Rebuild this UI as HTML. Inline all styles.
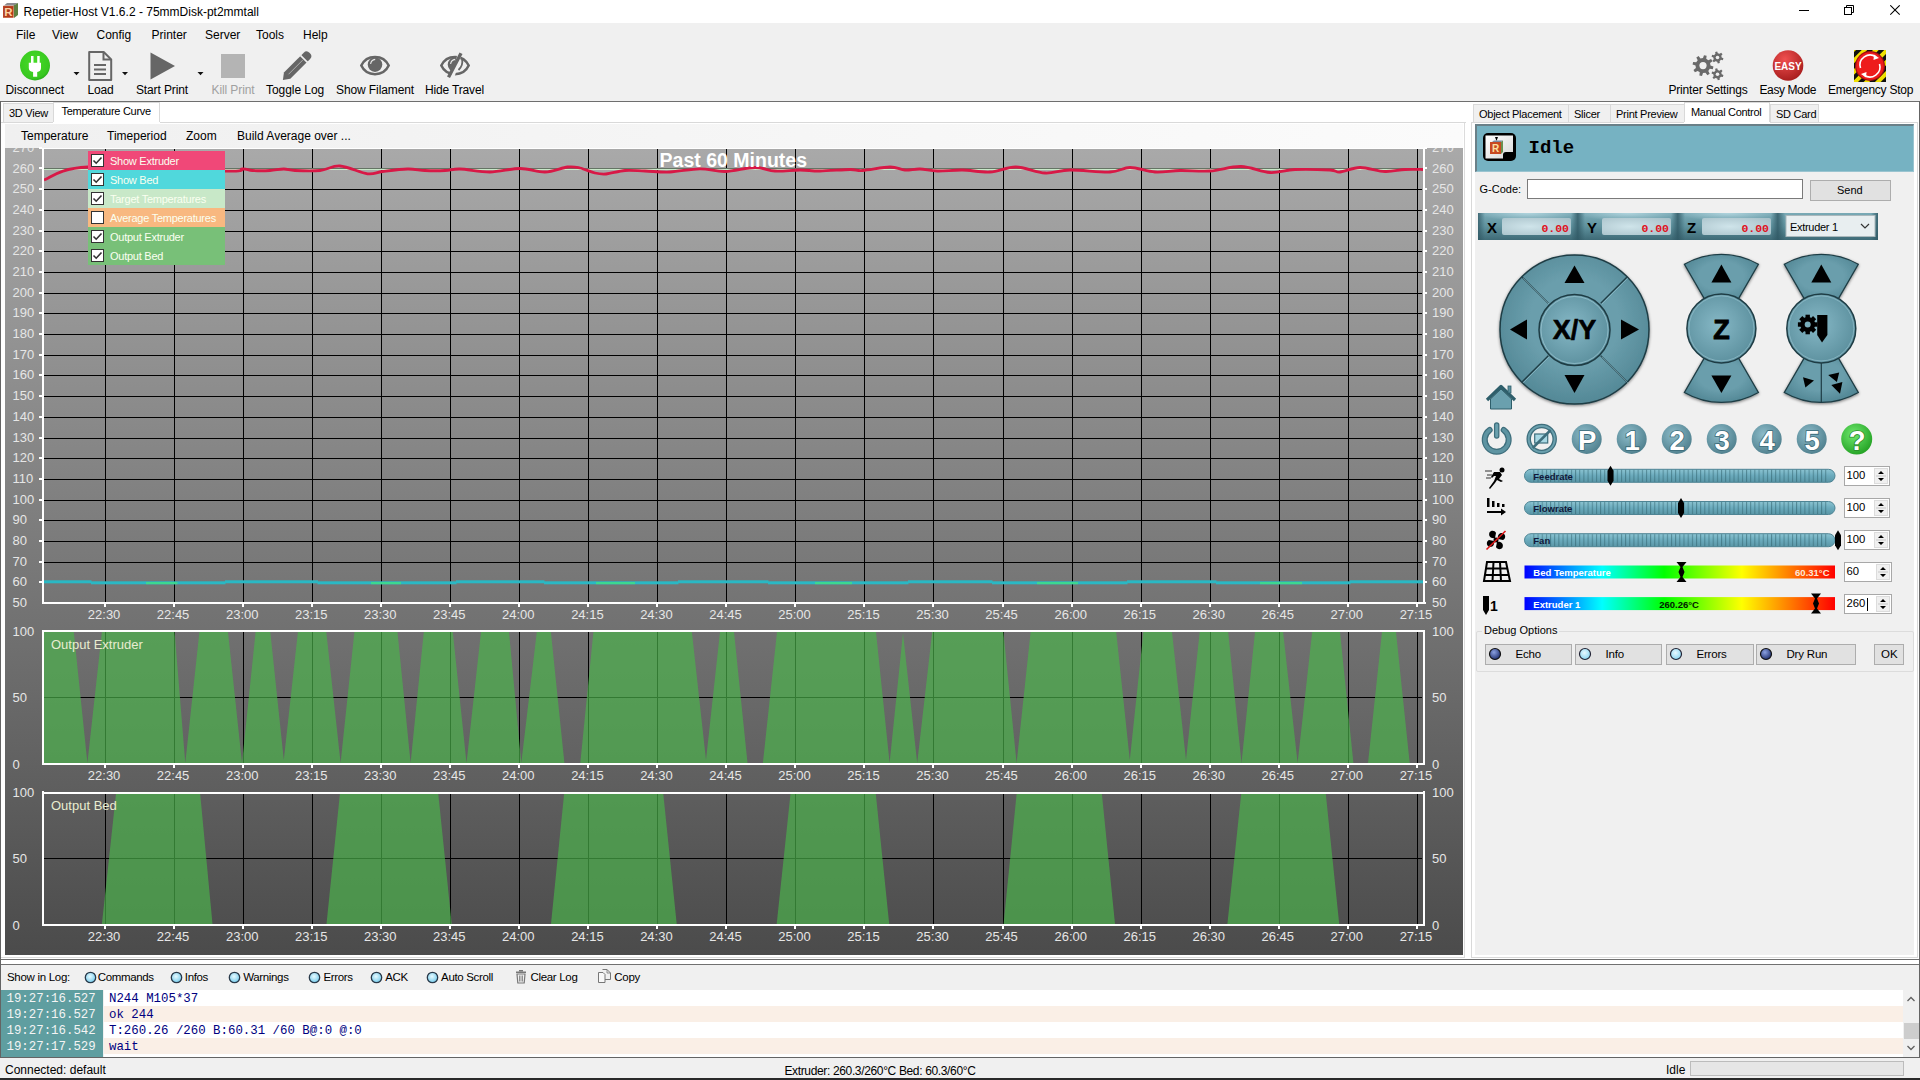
<!DOCTYPE html><html><head><meta charset="utf-8"><title>Repetier-Host</title><style>
*{box-sizing:border-box}
html,body{margin:0;padding:0}
body{width:1920px;height:1080px;position:relative;overflow:hidden;background:#f0f0f0;font-family:"Liberation Sans",sans-serif;font-size:12px;color:#000}
.a{position:absolute}
.t{position:absolute;white-space:nowrap;line-height:1}
.mono{font-family:"Liberation Mono",monospace}
</style></head><body><div class="a" style="left:0;top:0;width:1920px;height:23px;background:#fff"></div><div class="t" style="left:23.5px;top:5.5px;font-size:12px;color:#000">Repetier-Host V1.6.2 - 75mmDisk-pt2mmtall</div><svg class="a" style="left:0;top:0" width="22" height="22"><path d="M4 5.5 L7 3 L18 3 L14 5.5 Z" fill="#8c8c90"/><path d="M13.5 5.5 L18 3 L18 15 L14 18 Z" fill="#5e8040"/><rect x="3" y="5.8" width="10.6" height="12" fill="#c04a28"/><rect x="3.8" y="6.6" width="9" height="10.4" fill="#b03a1a"/><text x="4.3" y="16.2" font-family="Liberation Sans" font-weight="bold" font-size="11.5" fill="#fcd2a2">R</text></svg><div class="a" style="left:1799px;top:10px;width:10px;height:1px;background:#000"></div><svg class="a" style="left:1844px;top:5px" width="12" height="12"><rect x="0.5" y="2.5" width="7" height="7" fill="none" stroke="#000"/><path d="M2.5 2.5 V0.5 H9.5 V7.5 H7.5" fill="none" stroke="#000"/></svg><svg class="a" style="left:1890px;top:5px" width="12" height="12"><path d="M0.3 0.3 L9.7 9.7 M9.7 0.3 L0.3 9.7" stroke="#000" stroke-width="1.05"/></svg><div class="t" style="left:16px;top:29px">File</div><div class="t" style="left:52px;top:29px">View</div><div class="t" style="left:96.5px;top:29px">Config</div><div class="t" style="left:151.5px;top:29px">Printer</div><div class="t" style="left:205px;top:29px">Server</div><div class="t" style="left:256px;top:29px">Tools</div><div class="t" style="left:303px;top:29px">Help</div><svg class="a" style="left:0;top:45px" width="500" height="40">
<defs><radialGradient id="gg" cx="0.45" cy="0.4" r="0.65"><stop offset="0" stop-color="#48dc28"/><stop offset="0.8" stop-color="#38c820"/><stop offset="1" stop-color="#22a018"/></radialGradient></defs>
<circle cx="35" cy="20.5" r="15" fill="url(#gg)"/>
<path d="M31 11 h2.5 v6.7 h3.7 v-6.7 h2.5 v6.7 h1.3 v5.3 q0 3.3 -3.8 4 v4.7 h-4.1 v-4.7 q-4.3 -0.7 -4.3 -4 v-5.3 h2.2 z" fill="#fff"/>
<path d="M73.5 27 h6 l-3 3.3 z" fill="#111"/>
<path d="M89.2 7 h14.5 l7.5 7.5 v20.5 h-22 z" fill="none" stroke="#666" stroke-width="2" stroke-linejoin="round"/>
<path d="M103.5 7 v7.5 h7.5" fill="none" stroke="#666" stroke-width="2"/>
<rect x="94" y="19" width="12" height="2" fill="#666"/><rect x="94" y="23.5" width="12" height="2" fill="#666"/><rect x="94" y="28" width="12" height="2" fill="#666"/>
<path d="M122 27 h6 l-3 3.3 z" fill="#111"/>
<path d="M150.5 7.5 L175 21 L150.5 34.5 Z" fill="#666"/>
<path d="M197.5 27 h6 l-3 3.3 z" fill="#111"/>
<rect x="221" y="9" width="24" height="24" fill="#b4b4b4"/>
<g transform="translate(285,32.8) rotate(-45)"><path d="M3 -4.5 H31 Q35 -4.5 35 0 Q35 4.5 31 4.5 H3 L-3 0 Z" fill="#666"/><rect x="26" y="-5" width="1.6" height="10" fill="#f0f0f0"/><line x1="5" y1="0" x2="25" y2="0" stroke="#bbb" stroke-width="0.8"/></g>
<path d="M361.3 20.6 C366.5 9, 383.5 9, 388.7 20.6 C383.5 32, 366.5 32, 361.3 20.6 Z" fill="none" stroke="#666" stroke-width="2.5"/>
<circle cx="375" cy="19.6" r="7.3" fill="#666"/><path d="M370.6 19 q0.6 -4.2 4.6 -4.6" stroke="#e8e8e8" stroke-width="1.1" fill="none"/>
<defs><clipPath id="htl"><path d="M430 0 H460.5 L448 40 H430 Z"/></clipPath><clipPath id="htr"><path d="M464.5 0 H500 V40 H452 Z"/></clipPath></defs>
<g clip-path="url(#htl)"><path d="M441.3 20.6 C446.5 9, 463.5 9, 468.7 20.6 C463.5 32, 446.5 32, 441.3 20.6 Z" fill="none" stroke="#666" stroke-width="2.5"/><circle cx="455" cy="19.6" r="7.3" fill="#666"/><path d="M450.6 19 q0.6 -4.2 4.6 -4.6" stroke="#e8e8e8" stroke-width="1.1" fill="none"/></g>
<g clip-path="url(#htr)"><path d="M441.3 20.6 C446.5 9, 463.5 9, 468.7 20.6 C463.5 32, 446.5 32, 441.3 20.6 Z" fill="none" stroke="#666" stroke-width="2.5"/><path d="M462 14 Q463.5 20 458.5 25" fill="none" stroke="#666" stroke-width="1.8"/></g>
<path d="M459.5 7.5 L462.5 9 L450 33 L447 31.5 Z" fill="#666"/>
</svg><div class="t" style="left:5.5px;top:84px;color:#000;letter-spacing:-0.1px">Disconnect</div><div class="t" style="left:87.5px;top:84px;color:#000;letter-spacing:-0.2px">Load</div><div class="t" style="left:136px;top:84px;color:#000;letter-spacing:-0.13px">Start Print</div><div class="t" style="left:211.5px;top:84px;color:#a0a0a0;letter-spacing:-0.1px">Kill Print</div><div class="t" style="left:266px;top:84px;color:#000;letter-spacing:-0.05px">Toggle Log</div><div class="t" style="left:336px;top:84px;color:#000;letter-spacing:-0.1px">Show Filament</div><div class="t" style="left:425px;top:84px;color:#000;letter-spacing:-0.16px">Hide Travel</div><svg class="a" style="left:1680px;top:45px" width="240" height="40">
<g fill="#6a6a6a"><path d="M30.50 20.60 L33.45 21.59 L32.85 24.23 L29.76 23.85 L28.30 25.90 L29.69 28.69 L27.40 30.14 L25.49 27.68 L23.00 28.10 L22.01 31.05 L19.37 30.45 L19.75 27.36 L17.70 25.90 L14.91 27.29 L13.46 25.00 L15.92 23.09 L15.50 20.60 L12.55 19.61 L13.15 16.97 L16.24 17.35 L17.70 15.30 L16.31 12.51 L18.60 11.06 L20.51 13.52 L23.00 13.10 L23.99 10.15 L26.63 10.75 L26.25 13.84 L28.30 15.30 L31.09 13.91 L32.54 16.20 L30.08 18.11 Z"/><path d="M41.70 12.50 L43.45 13.25 L42.85 15.22 L40.97 14.86 L39.60 16.14 L39.83 18.03 L37.81 18.49 L37.19 16.69 L35.40 16.14 L33.87 17.28 L32.47 15.77 L33.72 14.33 L33.30 12.50 L31.55 11.75 L32.15 9.78 L34.03 10.14 L35.40 8.86 L35.17 6.97 L37.19 6.51 L37.81 8.31 L39.60 8.86 L41.13 7.72 L42.53 9.23 L41.28 10.67 Z"/><path d="M41.70 29.30 L43.45 30.05 L42.85 32.02 L40.97 31.66 L39.60 32.94 L39.83 34.83 L37.81 35.29 L37.19 33.49 L35.40 32.94 L33.87 34.08 L32.47 32.57 L33.72 31.13 L33.30 29.30 L31.55 28.55 L32.15 26.58 L34.03 26.94 L35.40 25.66 L35.17 23.77 L37.19 23.31 L37.81 25.11 L39.60 25.66 L41.13 24.52 L42.53 26.03 L41.28 27.47 Z"/></g>
<circle cx="23" cy="20.6" r="3.6" fill="#f0f0f0"/><circle cx="37.5" cy="12.5" r="1.8" fill="#f0f0f0"/><circle cx="37.5" cy="29.3" r="1.8" fill="#f0f0f0"/>
<defs><radialGradient id="rg" cx="0.4" cy="0.3" r="0.8"><stop offset="0" stop-color="#f05050"/><stop offset="1" stop-color="#a01818"/></radialGradient>
<pattern id="hz" width="8" height="8" patternUnits="userSpaceOnUse" patternTransform="rotate(45)"><rect width="4" height="8" fill="#111"/><rect x="4" width="4" height="8" fill="#f0e000"/></pattern></defs>
<circle cx="108" cy="20.5" r="15.3" fill="url(#rg)"/>
<text x="108" y="24.5" text-anchor="middle" font-family="Liberation Sans" font-weight="bold" font-size="10" fill="#fff">EASY</text>
<rect x="174" y="5" width="32" height="32" fill="url(#hz)"/>
<circle cx="190" cy="21" r="15" fill="#a01010"/><circle cx="190" cy="21" r="13.8" fill="#ee1c1c"/>
<path d="M180.5 23 A10 10 0 0 1 196 12" fill="none" stroke="#fff" stroke-width="1.6"/><path d="M199.5 19 A10 10 0 0 1 184 30" fill="none" stroke="#fff" stroke-width="1.6"/><path d="M194 9.5 L199 13 L193.5 15 Z" fill="#fff"/><path d="M186 32.5 L181 29 L186.5 27 Z" fill="#fff"/>
</svg><div class="t" style="left:1668.5px;top:84px;letter-spacing:-0.19px">Printer Settings</div><div class="t" style="left:1759.5px;top:84px;letter-spacing:-0.4px">Easy Mode</div><div class="t" style="left:1828px;top:84px;letter-spacing:-0.26px">Emergency Stop</div><div class="a" style="left:0;top:101px;width:1920px;height:1px;background:#6e6e6e"></div><div class="a" style="left:0;top:102px;width:1467px;height:858px;background:#fff"></div><div class="a" style="left:0;top:102px;width:1px;height:858px;background:#6e6e6e"></div><div class="a" style="left:3px;top:103px;width:51px;height:20px;background:#f0f0f0;border:1px solid #d9d9d9"></div><div class="t" style="left:9px;top:108px;font-size:11px;letter-spacing:-0.26px">3D View</div><div class="a" style="left:53px;top:102px;width:107px;height:21px;background:#fff;border:1px solid #d9d9d9;border-bottom:none"></div><div class="t" style="left:61.5px;top:106px;font-size:11px;letter-spacing:-0.28px">Temperature Curve</div><div class="a" style="left:1px;top:122px;width:1465px;height:1px;background:#d9d9d9"></div><div class="a" style="left:53px;top:122px;width:107px;height:1px;background:#fff"></div><div class="a" style="left:5px;top:124px;width:1458px;height:24px;background:linear-gradient(to right,#f0f0f0,#fbfbfb)"></div><div class="t" style="left:21px;top:130px">Temperature</div><div class="t" style="left:107px;top:130px">Timeperiod</div><div class="t" style="left:186px;top:130px">Zoom</div><div class="t" style="left:237px;top:130px">Build Average over ...</div><div class="a" style="left:1464px;top:123px;width:1px;height:835px;background:#dcdcdc"></div><div class="a" style="left:1px;top:957px;width:1464px;height:1px;background:#dcdcdc"></div><svg width="1920" height="1080" style="position:absolute;left:0;top:0"><defs><linearGradient id="cg" x1="0" y1="0" x2="0" y2="1"><stop offset="0" stop-color="#a9a9a9"/><stop offset="1" stop-color="#4b4b4b"/></linearGradient><clipPath id="lclip"><rect x="0" y="148" width="1920" height="900"/></clipPath><clipPath id="tclip"><rect x="44" y="148" width="1379" height="454"/></clipPath></defs><rect x="5" y="148" width="1458" height="807" fill="url(#cg)"/><g shape-rendering="crispEdges"><rect x="44" y="582" width="1378" height="1" fill="#000"/><rect x="44" y="562" width="1378" height="1" fill="#000"/><rect x="44" y="541" width="1378" height="1" fill="#000"/><rect x="44" y="520" width="1378" height="1" fill="#000"/><rect x="44" y="500" width="1378" height="1" fill="#000"/><rect x="44" y="479" width="1378" height="1" fill="#000"/><rect x="44" y="458" width="1378" height="1" fill="#000"/><rect x="44" y="438" width="1378" height="1" fill="#000"/><rect x="44" y="417" width="1378" height="1" fill="#000"/><rect x="44" y="396" width="1378" height="1" fill="#000"/><rect x="44" y="375" width="1378" height="1" fill="#000"/><rect x="44" y="355" width="1378" height="1" fill="#000"/><rect x="44" y="334" width="1378" height="1" fill="#000"/><rect x="44" y="313" width="1378" height="1" fill="#000"/><rect x="44" y="293" width="1378" height="1" fill="#000"/><rect x="44" y="272" width="1378" height="1" fill="#000"/><rect x="44" y="251" width="1378" height="1" fill="#000"/><rect x="44" y="231" width="1378" height="1" fill="#000"/><rect x="44" y="210" width="1378" height="1" fill="#000"/><rect x="44" y="189" width="1378" height="1" fill="#000"/><rect x="44" y="168" width="1378" height="1" fill="#000"/><rect x="105" y="148" width="1" height="454" fill="#000"/><rect x="174" y="148" width="1" height="454" fill="#000"/><rect x="243" y="148" width="1" height="454" fill="#000"/><rect x="312" y="148" width="1" height="454" fill="#000"/><rect x="381" y="148" width="1" height="454" fill="#000"/><rect x="450" y="148" width="1" height="454" fill="#000"/><rect x="519" y="148" width="1" height="454" fill="#000"/><rect x="588" y="148" width="1" height="454" fill="#000"/><rect x="657" y="148" width="1" height="454" fill="#000"/><rect x="726" y="148" width="1" height="454" fill="#000"/><rect x="795" y="148" width="1" height="454" fill="#000"/><rect x="864" y="148" width="1" height="454" fill="#000"/><rect x="933" y="148" width="1" height="454" fill="#000"/><rect x="1003" y="148" width="1" height="454" fill="#000"/><rect x="1072" y="148" width="1" height="454" fill="#000"/><rect x="1141" y="148" width="1" height="454" fill="#000"/><rect x="1210" y="148" width="1" height="454" fill="#000"/><rect x="1279" y="148" width="1" height="454" fill="#000"/><rect x="1348" y="148" width="1" height="454" fill="#000"/><rect x="1417" y="148" width="1" height="454" fill="#000"/></g><g fill="#fff" shape-rendering="crispEdges"><rect x="42" y="148" width="2" height="456"/><rect x="40" y="148" width="1385" height="1"/><rect x="1423" y="148" width="2" height="456"/><rect x="42" y="602" width="1384" height="2"/><rect x="39" y="581" width="3" height="2"/><rect x="1424" y="581" width="3" height="2"/><rect x="39" y="561" width="3" height="2"/><rect x="1424" y="561" width="3" height="2"/><rect x="39" y="540" width="3" height="2"/><rect x="1424" y="540" width="3" height="2"/><rect x="39" y="519" width="3" height="2"/><rect x="1424" y="519" width="3" height="2"/><rect x="39" y="499" width="3" height="2"/><rect x="1424" y="499" width="3" height="2"/><rect x="39" y="478" width="3" height="2"/><rect x="1424" y="478" width="3" height="2"/><rect x="39" y="457" width="3" height="2"/><rect x="1424" y="457" width="3" height="2"/><rect x="39" y="437" width="3" height="2"/><rect x="1424" y="437" width="3" height="2"/><rect x="39" y="416" width="3" height="2"/><rect x="1424" y="416" width="3" height="2"/><rect x="39" y="395" width="3" height="2"/><rect x="1424" y="395" width="3" height="2"/><rect x="39" y="374" width="3" height="2"/><rect x="1424" y="374" width="3" height="2"/><rect x="39" y="354" width="3" height="2"/><rect x="1424" y="354" width="3" height="2"/><rect x="39" y="333" width="3" height="2"/><rect x="1424" y="333" width="3" height="2"/><rect x="39" y="312" width="3" height="2"/><rect x="1424" y="312" width="3" height="2"/><rect x="39" y="292" width="3" height="2"/><rect x="1424" y="292" width="3" height="2"/><rect x="39" y="271" width="3" height="2"/><rect x="1424" y="271" width="3" height="2"/><rect x="39" y="250" width="3" height="2"/><rect x="1424" y="250" width="3" height="2"/><rect x="39" y="230" width="3" height="2"/><rect x="1424" y="230" width="3" height="2"/><rect x="39" y="209" width="3" height="2"/><rect x="1424" y="209" width="3" height="2"/><rect x="39" y="188" width="3" height="2"/><rect x="1424" y="188" width="3" height="2"/><rect x="39" y="167" width="3" height="2"/><rect x="1424" y="167" width="3" height="2"/><rect x="39" y="147" width="3" height="2"/><rect x="1424" y="147" width="3" height="2"/><rect x="104" y="604" width="2" height="3"/><rect x="173" y="604" width="2" height="3"/><rect x="242" y="604" width="2" height="3"/><rect x="311" y="604" width="2" height="3"/><rect x="380" y="604" width="2" height="3"/><rect x="449" y="604" width="2" height="3"/><rect x="518" y="604" width="2" height="3"/><rect x="587" y="604" width="2" height="3"/><rect x="656" y="604" width="2" height="3"/><rect x="725" y="604" width="2" height="3"/><rect x="794" y="604" width="2" height="3"/><rect x="863" y="604" width="2" height="3"/><rect x="932" y="604" width="2" height="3"/><rect x="1002" y="604" width="2" height="3"/><rect x="1071" y="604" width="2" height="3"/><rect x="1140" y="604" width="2" height="3"/><rect x="1209" y="604" width="2" height="3"/><rect x="1278" y="604" width="2" height="3"/><rect x="1347" y="604" width="2" height="3"/><rect x="1416" y="604" width="2" height="3"/></g><g font-family="Liberation Sans, sans-serif" font-size="13" fill="#e6e6e6" clip-path="url(#lclip)"><text x="12.5" y="607.1">50</text><text x="1432" y="607.1">50</text><text x="12.5" y="586.4">60</text><text x="1432" y="586.4">60</text><text x="12.5" y="565.8">70</text><text x="1432" y="565.8">70</text><text x="12.5" y="545.0">80</text><text x="1432" y="545.0">80</text><text x="12.5" y="524.4">90</text><text x="1432" y="524.4">90</text><text x="12.5" y="503.6">100</text><text x="1432" y="503.6">100</text><text x="12.5" y="482.9">110</text><text x="1432" y="482.9">110</text><text x="12.5" y="462.2">120</text><text x="1432" y="462.2">120</text><text x="12.5" y="441.5">130</text><text x="1432" y="441.5">130</text><text x="12.5" y="420.8">140</text><text x="1432" y="420.8">140</text><text x="12.5" y="400.1">150</text><text x="1432" y="400.1">150</text><text x="12.5" y="379.4">160</text><text x="1432" y="379.4">160</text><text x="12.5" y="358.8">170</text><text x="1432" y="358.8">170</text><text x="12.5" y="338.0">180</text><text x="1432" y="338.0">180</text><text x="12.5" y="317.4">190</text><text x="1432" y="317.4">190</text><text x="12.5" y="296.6">200</text><text x="1432" y="296.6">200</text><text x="12.5" y="275.9">210</text><text x="1432" y="275.9">210</text><text x="12.5" y="255.3">220</text><text x="1432" y="255.3">220</text><text x="12.5" y="234.6">230</text><text x="1432" y="234.6">230</text><text x="12.5" y="213.9">240</text><text x="1432" y="213.9">240</text><text x="12.5" y="193.2">250</text><text x="1432" y="193.2">250</text><text x="12.5" y="172.5">260</text><text x="1432" y="172.5">260</text><text x="12.5" y="151.8">270</text><text x="1432" y="151.8">270</text><text x="104.1" y="619" text-anchor="middle">22:30</text><text x="173.1" y="619" text-anchor="middle">22:45</text><text x="242.2" y="619" text-anchor="middle">23:00</text><text x="311.2" y="619" text-anchor="middle">23:15</text><text x="380.3" y="619" text-anchor="middle">23:30</text><text x="449.3" y="619" text-anchor="middle">23:45</text><text x="518.3" y="619" text-anchor="middle">24:00</text><text x="587.4" y="619" text-anchor="middle">24:15</text><text x="656.4" y="619" text-anchor="middle">24:30</text><text x="725.5" y="619" text-anchor="middle">24:45</text><text x="794.5" y="619" text-anchor="middle">25:00</text><text x="863.5" y="619" text-anchor="middle">25:15</text><text x="932.6" y="619" text-anchor="middle">25:30</text><text x="1001.6" y="619" text-anchor="middle">25:45</text><text x="1070.7" y="619" text-anchor="middle">26:00</text><text x="1139.7" y="619" text-anchor="middle">26:15</text><text x="1208.7" y="619" text-anchor="middle">26:30</text><text x="1277.8" y="619" text-anchor="middle">26:45</text><text x="1346.8" y="619" text-anchor="middle">27:00</text><text x="1415.9" y="619" text-anchor="middle">27:15</text></g><g clip-path="url(#tclip)"><line x1="44" y1="169.3" x2="1422" y2="169.3" stroke="#c8e8c8" stroke-width="1.5"/><path fill="none" stroke="#d81846" stroke-width="2.8" stroke-linejoin="round" d="M44.0 180.0 C51.3 177.8 57.8 168.5 88.0 167.0 C118.2 165.5 199.2 171.0 225.0 171.2 C250.8 171.5 237.9 168.9 242.5 168.8 C247.1 168.6 247.9 170.2 252.5 170.5 C257.1 170.8 264.8 170.8 270.0 170.5 C275.2 170.2 279.6 169.0 283.8 169.0 C287.9 169.0 289.0 170.2 295.0 170.5 C301.0 170.8 312.5 171.2 320.0 170.5 C327.5 169.8 332.1 165.5 340.0 166.0 C347.9 166.5 360.4 172.8 367.5 173.8 C374.6 174.7 375.8 172.3 382.5 171.5 C389.2 170.7 400.4 169.2 407.5 169.0 C414.6 168.8 418.8 170.2 425.0 170.5 C431.2 170.8 439.2 170.8 445.0 170.5 C450.8 170.2 452.5 168.8 460.0 169.0 C467.5 169.2 480.0 172.1 490.0 172.0 C500.0 171.9 510.8 168.5 520.0 168.5 C529.2 168.5 537.1 172.2 545.0 172.0 C552.9 171.8 561.7 167.7 567.5 167.0 C573.3 166.3 575.4 167.0 580.0 168.0 C584.6 169.0 590.7 172.0 595.0 173.0 C599.3 174.0 601.0 174.4 606.0 174.0 C611.0 173.6 618.5 171.0 625.0 170.5 C631.5 170.0 637.5 170.8 645.0 171.0 C652.5 171.2 660.8 172.4 670.0 172.0 C679.2 171.6 690.8 168.8 700.0 168.8 C709.2 168.7 715.8 171.7 725.0 171.5 C734.2 171.3 746.7 167.6 755.0 167.5 C763.3 167.4 767.5 170.6 775.0 171.0 C782.5 171.4 792.5 170.0 800.0 170.0 C807.5 170.0 811.7 171.1 820.0 171.0 C828.3 170.9 842.9 169.6 850.0 169.5 C857.1 169.4 855.8 170.9 862.5 170.5 C869.2 170.1 882.9 167.1 890.0 167.0 C897.1 166.9 900.0 169.7 905.0 170.0 C910.0 170.3 914.6 168.8 920.0 169.0 C925.4 169.2 930.4 170.8 937.5 171.0 C944.6 171.2 953.8 169.8 962.5 170.0 C971.2 170.2 981.1 172.5 990.0 172.0 C998.9 171.5 1006.8 166.8 1016.0 167.0 C1025.2 167.2 1036.0 172.5 1045.0 173.0 C1054.0 173.5 1059.2 170.2 1070.0 170.0 C1080.8 169.8 1100.0 172.4 1110.0 172.0 C1120.0 171.6 1122.5 167.5 1130.0 167.5 C1137.5 167.5 1146.7 171.5 1155.0 172.0 C1163.3 172.5 1170.8 170.7 1180.0 170.5 C1189.2 170.3 1199.8 171.7 1210.0 171.0 C1220.2 170.3 1231.0 166.2 1241.0 166.5 C1251.0 166.8 1261.0 172.0 1270.0 172.5 C1279.0 173.0 1285.0 169.9 1295.0 169.5 C1305.0 169.1 1322.5 169.6 1330.0 170.0 C1337.5 170.4 1335.0 172.4 1340.0 172.0 C1345.0 171.6 1352.5 167.6 1360.0 167.5 C1367.5 167.4 1377.5 171.2 1385.0 171.5 C1392.5 171.8 1398.5 169.8 1405.0 169.5 C1411.5 169.2 1420.8 169.5 1424.0 169.5"/><rect x="44" y="580.3" width="47.5" height="3" fill="#2ab8c4"/><rect x="91" y="581.3" width="134.5" height="3" fill="#2ab8c4"/><rect x="225" y="580.3" width="93.0" height="3" fill="#2ab8c4"/><rect x="317.5" y="581.3" width="139.0" height="3" fill="#2ab8c4"/><rect x="456" y="580.3" width="88.5" height="3" fill="#2ab8c4"/><rect x="544" y="581.3" width="134.5" height="3" fill="#2ab8c4"/><rect x="678" y="580.3" width="90.5" height="3" fill="#2ab8c4"/><rect x="768" y="581.3" width="140.5" height="3" fill="#2ab8c4"/><rect x="908" y="580.3" width="84.5" height="3" fill="#2ab8c4"/><rect x="992" y="581.3" width="135.5" height="3" fill="#2ab8c4"/><rect x="1127" y="580.3" width="89.5" height="3" fill="#2ab8c4"/><rect x="1216" y="581.3" width="134.5" height="3" fill="#2ab8c4"/><rect x="1350" y="580.3" width="74.5" height="3" fill="#2ab8c4"/><rect x="146" y="582" width="31.5" height="2.2" fill="#3cd890"/><rect x="371" y="582" width="30" height="2.2" fill="#3cd890"/><rect x="596" y="582" width="39" height="2.2" fill="#3cd890"/><rect x="815" y="582" width="37" height="2.2" fill="#3cd890"/><rect x="1037" y="582" width="41" height="2.2" fill="#3cd890"/><rect x="1260" y="582" width="42" height="2.2" fill="#3cd890"/></g><text x="733.3" y="166.8" text-anchor="middle" font-family="Liberation Sans, sans-serif" font-size="19.5" font-weight="bold" fill="#fff" letter-spacing="0">Past 60 Minutes</text><g shape-rendering="crispEdges"><rect x="44" y="697" width="1378" height="1" fill="#000"/><rect x="105" y="632" width="1" height="131" fill="#000"/><rect x="174" y="632" width="1" height="131" fill="#000"/><rect x="243" y="632" width="1" height="131" fill="#000"/><rect x="312" y="632" width="1" height="131" fill="#000"/><rect x="381" y="632" width="1" height="131" fill="#000"/><rect x="450" y="632" width="1" height="131" fill="#000"/><rect x="519" y="632" width="1" height="131" fill="#000"/><rect x="588" y="632" width="1" height="131" fill="#000"/><rect x="657" y="632" width="1" height="131" fill="#000"/><rect x="726" y="632" width="1" height="131" fill="#000"/><rect x="795" y="632" width="1" height="131" fill="#000"/><rect x="864" y="632" width="1" height="131" fill="#000"/><rect x="933" y="632" width="1" height="131" fill="#000"/><rect x="1003" y="632" width="1" height="131" fill="#000"/><rect x="1072" y="632" width="1" height="131" fill="#000"/><rect x="1141" y="632" width="1" height="131" fill="#000"/><rect x="1210" y="632" width="1" height="131" fill="#000"/><rect x="1279" y="632" width="1" height="131" fill="#000"/><rect x="1348" y="632" width="1" height="131" fill="#000"/><rect x="1417" y="632" width="1" height="131" fill="#000"/></g><polygon fill="rgb(75,180,75)" fill-opacity="0.68" points="44.0,763.0 44.0,632.0 73.8,632.0 87.4,763.0 101.9,632.0 174.6,632.0 185.3,763.0 199.4,632.0 228.0,632.0 242.0,763.0 255.6,632.0 270.3,632.0 283.8,760.0 297.9,632.0 326.3,632.0 340.6,763.0 354.4,632.0 397.5,632.0 410.6,763.0 423.8,632.0 452.8,632.0 466.5,763.0 481.0,632.0 509.0,632.0 521.3,763.0 536.8,632.0 550.9,632.0 564.4,763.0 580.3,763.0 593.4,632.0 691.9,632.0 706.0,760.0 720.0,632.0 734.0,632.0 747.5,763.0 762.9,763.0 777.0,632.0 876.0,632.0 889.6,763.0 903.0,633.0 917.2,763.0 932.2,632.0 1003.4,632.0 1016.6,763.0 1030.6,632.0 1116.2,632.0 1129.8,760.0 1143.4,632.0 1172.0,632.0 1186.0,760.0 1199.7,632.0 1228.2,632.0 1241.5,763.0 1255.0,632.0 1283.1,632.0 1297.6,763.0 1312.2,632.0 1340.0,632.0 1353.4,763.0 1368.0,763.0 1382.0,632.0 1396.0,632.0 1409.7,763.0 1422.0,763.0 1422.0,763.0"/><g fill="#fff" shape-rendering="crispEdges"><rect x="42" y="630" width="1383" height="2"/><rect x="42" y="763" width="1383" height="2"/><rect x="42" y="630" width="2" height="135"/><rect x="1423" y="630" width="2" height="135"/><rect x="104" y="765" width="2" height="3"/><rect x="173" y="765" width="2" height="3"/><rect x="242" y="765" width="2" height="3"/><rect x="311" y="765" width="2" height="3"/><rect x="380" y="765" width="2" height="3"/><rect x="449" y="765" width="2" height="3"/><rect x="518" y="765" width="2" height="3"/><rect x="587" y="765" width="2" height="3"/><rect x="656" y="765" width="2" height="3"/><rect x="725" y="765" width="2" height="3"/><rect x="794" y="765" width="2" height="3"/><rect x="863" y="765" width="2" height="3"/><rect x="932" y="765" width="2" height="3"/><rect x="1002" y="765" width="2" height="3"/><rect x="1071" y="765" width="2" height="3"/><rect x="1140" y="765" width="2" height="3"/><rect x="1209" y="765" width="2" height="3"/><rect x="1278" y="765" width="2" height="3"/><rect x="1347" y="765" width="2" height="3"/><rect x="1416" y="765" width="2" height="3"/></g><g font-family="Liberation Sans, sans-serif" font-size="13" fill="#e6e6e6"><text x="12.5" y="635.6">100</text><text x="1432" y="635.6">100</text><text x="12.5" y="702.1">50</text><text x="1432" y="702.1">50</text><text x="12.5" y="768.6">0</text><text x="1432" y="768.6">0</text><text x="104.1" y="780" text-anchor="middle">22:30</text><text x="173.1" y="780" text-anchor="middle">22:45</text><text x="242.2" y="780" text-anchor="middle">23:00</text><text x="311.2" y="780" text-anchor="middle">23:15</text><text x="380.3" y="780" text-anchor="middle">23:30</text><text x="449.3" y="780" text-anchor="middle">23:45</text><text x="518.3" y="780" text-anchor="middle">24:00</text><text x="587.4" y="780" text-anchor="middle">24:15</text><text x="656.4" y="780" text-anchor="middle">24:30</text><text x="725.5" y="780" text-anchor="middle">24:45</text><text x="794.5" y="780" text-anchor="middle">25:00</text><text x="863.5" y="780" text-anchor="middle">25:15</text><text x="932.6" y="780" text-anchor="middle">25:30</text><text x="1001.6" y="780" text-anchor="middle">25:45</text><text x="1070.7" y="780" text-anchor="middle">26:00</text><text x="1139.7" y="780" text-anchor="middle">26:15</text><text x="1208.7" y="780" text-anchor="middle">26:30</text><text x="1277.8" y="780" text-anchor="middle">26:45</text><text x="1346.8" y="780" text-anchor="middle">27:00</text><text x="1415.9" y="780" text-anchor="middle">27:15</text></g><text x="51" y="649" font-family="Liberation Sans, sans-serif" font-size="13" fill="#e8ecd0">Output Extruder</text><g shape-rendering="crispEdges"><rect x="44" y="858" width="1378" height="1" fill="#000"/><rect x="105" y="793" width="1" height="131" fill="#000"/><rect x="174" y="793" width="1" height="131" fill="#000"/><rect x="243" y="793" width="1" height="131" fill="#000"/><rect x="312" y="793" width="1" height="131" fill="#000"/><rect x="381" y="793" width="1" height="131" fill="#000"/><rect x="450" y="793" width="1" height="131" fill="#000"/><rect x="519" y="793" width="1" height="131" fill="#000"/><rect x="588" y="793" width="1" height="131" fill="#000"/><rect x="657" y="793" width="1" height="131" fill="#000"/><rect x="726" y="793" width="1" height="131" fill="#000"/><rect x="795" y="793" width="1" height="131" fill="#000"/><rect x="864" y="793" width="1" height="131" fill="#000"/><rect x="933" y="793" width="1" height="131" fill="#000"/><rect x="1003" y="793" width="1" height="131" fill="#000"/><rect x="1072" y="793" width="1" height="131" fill="#000"/><rect x="1141" y="793" width="1" height="131" fill="#000"/><rect x="1210" y="793" width="1" height="131" fill="#000"/><rect x="1279" y="793" width="1" height="131" fill="#000"/><rect x="1348" y="793" width="1" height="131" fill="#000"/><rect x="1417" y="793" width="1" height="131" fill="#000"/></g><polygon fill="rgb(75,180,75)" fill-opacity="0.68" points="101.9,924 116.1,793 200.1,793 212.5,924"/><polygon fill="rgb(75,180,75)" fill-opacity="0.68" points="326.5,924 340,793 438.2,793 451.7,924"/><polygon fill="rgb(75,180,75)" fill-opacity="0.68" points="551,924 564.2,793 663.2,793 676.7,924"/><polygon fill="rgb(75,180,75)" fill-opacity="0.68" points="776.7,924 790.6,793 875.7,793 889.2,924"/><polygon fill="rgb(75,180,75)" fill-opacity="0.68" points="1003.6,924 1016.7,793 1101.8,793 1115,924"/><polygon fill="rgb(75,180,75)" fill-opacity="0.68" points="1227.4,924 1241.3,793 1325.7,793 1339.2,924"/><g fill="#fff" shape-rendering="crispEdges"><rect x="42" y="792" width="1383" height="2"/><rect x="42" y="924" width="1383" height="2"/><rect x="42" y="791" width="2" height="135"/><rect x="1423" y="791" width="2" height="135"/><rect x="104" y="926" width="2" height="3"/><rect x="173" y="926" width="2" height="3"/><rect x="242" y="926" width="2" height="3"/><rect x="311" y="926" width="2" height="3"/><rect x="380" y="926" width="2" height="3"/><rect x="449" y="926" width="2" height="3"/><rect x="518" y="926" width="2" height="3"/><rect x="587" y="926" width="2" height="3"/><rect x="656" y="926" width="2" height="3"/><rect x="725" y="926" width="2" height="3"/><rect x="794" y="926" width="2" height="3"/><rect x="863" y="926" width="2" height="3"/><rect x="932" y="926" width="2" height="3"/><rect x="1002" y="926" width="2" height="3"/><rect x="1071" y="926" width="2" height="3"/><rect x="1140" y="926" width="2" height="3"/><rect x="1209" y="926" width="2" height="3"/><rect x="1278" y="926" width="2" height="3"/><rect x="1347" y="926" width="2" height="3"/><rect x="1416" y="926" width="2" height="3"/></g><g font-family="Liberation Sans, sans-serif" font-size="13" fill="#e6e6e6"><text x="12.5" y="796.6">100</text><text x="1432" y="796.6">100</text><text x="12.5" y="863.1">50</text><text x="1432" y="863.1">50</text><text x="12.5" y="929.6">0</text><text x="1432" y="929.6">0</text><text x="104.1" y="941" text-anchor="middle">22:30</text><text x="173.1" y="941" text-anchor="middle">22:45</text><text x="242.2" y="941" text-anchor="middle">23:00</text><text x="311.2" y="941" text-anchor="middle">23:15</text><text x="380.3" y="941" text-anchor="middle">23:30</text><text x="449.3" y="941" text-anchor="middle">23:45</text><text x="518.3" y="941" text-anchor="middle">24:00</text><text x="587.4" y="941" text-anchor="middle">24:15</text><text x="656.4" y="941" text-anchor="middle">24:30</text><text x="725.5" y="941" text-anchor="middle">24:45</text><text x="794.5" y="941" text-anchor="middle">25:00</text><text x="863.5" y="941" text-anchor="middle">25:15</text><text x="932.6" y="941" text-anchor="middle">25:30</text><text x="1001.6" y="941" text-anchor="middle">25:45</text><text x="1070.7" y="941" text-anchor="middle">26:00</text><text x="1139.7" y="941" text-anchor="middle">26:15</text><text x="1208.7" y="941" text-anchor="middle">26:30</text><text x="1277.8" y="941" text-anchor="middle">26:45</text><text x="1346.8" y="941" text-anchor="middle">27:00</text><text x="1415.9" y="941" text-anchor="middle">27:15</text></g><text x="51" y="810" font-family="Liberation Sans, sans-serif" font-size="13" fill="#e8ecd0">Output Bed</text></svg><div class="a" style="left:88px;top:151px;width:137px;height:19px;background:#f04878"></div><div class="a" style="left:91px;top:154px;width:13px;height:13px;background:#fff;border:1px solid #333"></div><svg class="a" style="left:91px;top:154px" width="13" height="13"><path d="M2.5 6.5 L5.2 9.2 L10.5 3.5" fill="none" stroke="#333" stroke-width="1.6"/></svg><div class="t" style="left:110px;top:155.5px;color:#fafff0;font-size:11px;letter-spacing:-0.25px">Show Extruder</div><div class="a" style="left:88px;top:170px;width:137px;height:19px;background:#50d8dc"></div><div class="a" style="left:91px;top:173px;width:13px;height:13px;background:#fff;border:1px solid #333"></div><svg class="a" style="left:91px;top:173px" width="13" height="13"><path d="M2.5 6.5 L5.2 9.2 L10.5 3.5" fill="none" stroke="#333" stroke-width="1.6"/></svg><div class="t" style="left:110px;top:174.5px;color:#fafff0;font-size:11px;letter-spacing:-0.25px">Show Bed</div><div class="a" style="left:88px;top:189px;width:137px;height:19px;background:#c8e8c8"></div><div class="a" style="left:91px;top:192px;width:13px;height:13px;background:#fff;border:1px solid #333"></div><svg class="a" style="left:91px;top:192px" width="13" height="13"><path d="M2.5 6.5 L5.2 9.2 L10.5 3.5" fill="none" stroke="#333" stroke-width="1.6"/></svg><div class="t" style="left:110px;top:193.5px;color:#fafff0;font-size:11px;letter-spacing:-0.25px">Target Temperatures</div><div class="a" style="left:88px;top:208px;width:137px;height:19px;background:#f8b880"></div><div class="a" style="left:91px;top:211px;width:13px;height:13px;background:#fff;border:1px solid #333"></div><div class="t" style="left:110px;top:212.5px;color:#fafff0;font-size:11px;letter-spacing:-0.25px">Average Temperatures</div><div class="a" style="left:88px;top:227px;width:137px;height:19px;background:#78c078"></div><div class="a" style="left:91px;top:230px;width:13px;height:13px;background:#fff;border:1px solid #333"></div><svg class="a" style="left:91px;top:230px" width="13" height="13"><path d="M2.5 6.5 L5.2 9.2 L10.5 3.5" fill="none" stroke="#333" stroke-width="1.6"/></svg><div class="t" style="left:110px;top:231.5px;color:#fafff0;font-size:11px;letter-spacing:-0.25px">Output Extruder</div><div class="a" style="left:88px;top:246px;width:137px;height:19px;background:#78c078"></div><div class="a" style="left:91px;top:249px;width:13px;height:13px;background:#fff;border:1px solid #333"></div><svg class="a" style="left:91px;top:249px" width="13" height="13"><path d="M2.5 6.5 L5.2 9.2 L10.5 3.5" fill="none" stroke="#333" stroke-width="1.6"/></svg><div class="t" style="left:110px;top:250.5px;color:#fafff0;font-size:11px;letter-spacing:-0.25px">Output Bed</div><div class="a" style="left:1467px;top:102px;width:453px;height:858px;background:#fff"></div><div class="a" style="left:1471px;top:122px;width:447px;height:836px;background:#fff;border:1px solid #d9d9d9"></div><div class="a" style="left:1475px;top:124px;width:439px;height:831px;background:#f0f0f0"></div><div class="a" style="left:1473px;top:104px;width:96px;height:19px;background:#f0f0f0;border:1px solid #d9d9d9"></div><div class="t" style="left:1479px;top:109px;font-size:11px;letter-spacing:-0.26px">Object Placement</div><div class="a" style="left:1568px;top:104px;width:43px;height:19px;background:#f0f0f0;border:1px solid #d9d9d9"></div><div class="t" style="left:1574px;top:109px;font-size:11px;letter-spacing:-0.26px">Slicer</div><div class="a" style="left:1610px;top:104px;width:75px;height:19px;background:#f0f0f0;border:1px solid #d9d9d9"></div><div class="t" style="left:1616px;top:109px;font-size:11px;letter-spacing:-0.26px">Print Preview</div><div class="a" style="left:1684px;top:102px;width:86px;height:21px;background:#fff;border:1px solid #d9d9d9;border-bottom:none"></div><div class="t" style="left:1691px;top:107px;font-size:11px;letter-spacing:-0.3px">Manual Control</div><div class="a" style="left:1770px;top:104px;width:49px;height:19px;background:#f0f0f0;border:1px solid #d9d9d9"></div><div class="t" style="left:1776px;top:109px;font-size:11px;letter-spacing:-0.26px">SD Card</div><div class="a" style="left:1684px;top:122px;width:86px;height:1px;background:#fff"></div><div class="a" style="left:1475px;top:124px;width:439px;height:48px;background:#76b2c2;border-top:2px solid #6a8088;border-left:2px solid #6a8088;border-right:1px solid #9ac4d0;border-bottom:1px solid #9ac4d0"></div><svg class="a" style="left:1481px;top:131px" width="38" height="33">
<rect x="2" y="2" width="33" height="28" rx="5" fill="#000"/>
<defs><linearGradient id="ib" x1="0" y1="0" x2="1" y2="1"><stop offset="0" stop-color="#fff"/><stop offset="1" stop-color="#d8d8d8"/></linearGradient></defs>
<path d="M4.5 4.5 H32 V21 H25 Q22 21 22 24 V27.5 H4.5 Z" fill="url(#ib)"/>
<path d="M14 6 L17 6 L15.5 10 Z" fill="#000"/>
<path d="M11 11 L13 9.5 L22 9.5 L20 11 Z" fill="#7a8aa0"/>
<path d="M20 11 L22 9.5 L22 21 L20 23 Z" fill="#6a9050"/>
<rect x="9" y="11" width="11" height="12" fill="#c84820"/>
<text x="11" y="21" font-family="Liberation Sans" font-weight="bold" font-size="10" fill="#fde0a0">R</text>
</svg><div class="t mono" style="left:1528.5px;top:139px;font-size:19px;font-weight:bold;color:#000">Idle</div><div class="t" style="left:1479.5px;top:184px;font-size:11px">G-Code:</div><div class="a" style="left:1527px;top:179px;width:276px;height:20px;background:#fff;border:1px solid #7a7a7a"></div><div class="a" style="left:1810px;top:180px;width:81px;height:21px;background:#e1e1e1;border:1px solid #adadad"></div><div class="t" style="left:1837px;top:185px;font-size:11px">Send</div><svg class="a" style="left:1478px;top:213px" width="402" height="28"><defs><linearGradient id="xb" x1="0" y1="0" x2="0" y2="1"><stop offset="0" stop-color="#7aaab6"/><stop offset="0.5" stop-color="#5f929e"/><stop offset="1" stop-color="#3e6a76"/></linearGradient><radialGradient id="xv" cx="0.4" cy="0.5" r="0.7"><stop offset="0" stop-color="#cfe4ea"/><stop offset="1" stop-color="#a9c2ca"/></radialGradient><linearGradient id="xe" x1="0" y1="0" x2="1" y2="0"><stop offset="0" stop-color="#2e5662" stop-opacity="0.75"/><stop offset="0.07" stop-color="#2e5662" stop-opacity="0"/><stop offset="0.93" stop-color="#2e5662" stop-opacity="0"/><stop offset="1" stop-color="#2e5662" stop-opacity="0.8"/></linearGradient><radialGradient id="xh" cx="0.5" cy="0" r="0.5" gradientTransform="translate(0,0) scale(1,0.6)"><stop offset="0" stop-color="#c8e6ee" stop-opacity="0.7"/><stop offset="1" stop-color="#c8e6ee" stop-opacity="0"/></radialGradient></defs><rect x="0" y="0" width="100" height="27" fill="url(#xb)"/><rect x="0" y="0" width="100" height="27" fill="url(#xh)"/><rect x="0" y="0" width="100" height="27" fill="url(#xe)"/><rect x="24" y="5" width="69" height="17" rx="2" fill="url(#xv)"/><text x="9" y="19.5" font-family="Liberation Sans" font-weight="bold" font-size="15" fill="#000">X</text><text x="91" y="18.5" text-anchor="end" font-family="Liberation Mono" font-weight="bold" font-size="11.5" fill="#e01020">0.00</text><rect x="100" y="0" width="100" height="27" fill="url(#xb)"/><rect x="100" y="0" width="100" height="27" fill="url(#xh)"/><rect x="100" y="0" width="100" height="27" fill="url(#xe)"/><rect x="124" y="5" width="69" height="17" rx="2" fill="url(#xv)"/><text x="109" y="19.5" font-family="Liberation Sans" font-weight="bold" font-size="15" fill="#000">Y</text><text x="191" y="18.5" text-anchor="end" font-family="Liberation Mono" font-weight="bold" font-size="11.5" fill="#e01020">0.00</text><rect x="200" y="0" width="100" height="27" fill="url(#xb)"/><rect x="200" y="0" width="100" height="27" fill="url(#xh)"/><rect x="200" y="0" width="100" height="27" fill="url(#xe)"/><rect x="224" y="5" width="69" height="17" rx="2" fill="url(#xv)"/><text x="209" y="19.5" font-family="Liberation Sans" font-weight="bold" font-size="15" fill="#000">Z</text><text x="291" y="18.5" text-anchor="end" font-family="Liberation Mono" font-weight="bold" font-size="11.5" fill="#e01020">0.00</text><rect x="300" y="0" width="100" height="27" fill="url(#xb)"/><rect x="300" y="0" width="100" height="27" fill="url(#xe)"/><rect x="308" y="2.5" width="89" height="21" fill="#e8eef0" stroke="#aab8bc"/><text x="312" y="17.5" font-family="Liberation Sans" font-size="11" fill="#000" letter-spacing="-0.3">Extruder 1</text><path d="M383 11 L387 15 L391 11" fill="none" stroke="#333" stroke-width="1.2"/></svg><svg class="a" style="left:1475px;top:245px" width="440" height="175"><defs>
<radialGradient id="jr" cx="0.5" cy="0.45" r="0.6"><stop offset="0.5" stop-color="#6a9eac"/><stop offset="1" stop-color="#4f8492"/></radialGradient>
<radialGradient id="jc" cx="0.45" cy="0.45" r="0.6"><stop offset="0" stop-color="#86b8c6"/><stop offset="1" stop-color="#5a8e9c"/></radialGradient>
<filter id="sh" x="-20%" y="-20%" width="140%" height="140%"><feGaussianBlur in="SourceAlpha" stdDeviation="1.5"/><feOffset dx="0" dy="1"/><feComponentTransfer><feFuncA type="linear" slope="0.5"/></feComponentTransfer><feMerge><feMergeNode/><feMergeNode in="SourceGraphic"/></feMerge></filter>
</defs><g filter="url(#sh)"><circle cx="99.5" cy="84.5" r="74.5" fill="url(#jr)" stroke="#1e3c44" stroke-width="1.5"/></g><line x1="125.7" y1="110.7" x2="151.8" y2="136.8" stroke="#1e3c44" stroke-width="1.3"/><line x1="126.7" y1="111.7" x2="152.8" y2="137.8" stroke="#9cc8d4" stroke-width="0.8" opacity="0.7"/><line x1="73.3" y1="110.7" x2="47.2" y2="136.8" stroke="#1e3c44" stroke-width="1.3"/><line x1="74.3" y1="111.7" x2="48.2" y2="137.8" stroke="#9cc8d4" stroke-width="0.8" opacity="0.7"/><line x1="73.3" y1="58.3" x2="47.2" y2="32.2" stroke="#1e3c44" stroke-width="1.3"/><line x1="74.3" y1="59.3" x2="48.2" y2="33.2" stroke="#9cc8d4" stroke-width="0.8" opacity="0.7"/><line x1="125.7" y1="58.3" x2="151.8" y2="32.2" stroke="#1e3c44" stroke-width="1.3"/><line x1="126.7" y1="59.3" x2="152.8" y2="33.2" stroke="#9cc8d4" stroke-width="0.8" opacity="0.7"/><circle cx="99.5" cy="85.0" r="35.5" fill="url(#jc)" stroke="#1e3c44" stroke-width="1.5"/><circle cx="99.5" cy="85.0" r="33.5" fill="none" stroke="#a8d0dc" stroke-width="1" opacity="0.6"/><path d="M89.5 38 L99.5 20.5 L109.5 38 Z" fill="#000"/><path d="M89.5 130 L99.5 148 L109.5 130 Z" fill="#000"/><path d="M52 74.5 L35 84.5 L52 94.5 Z" fill="#000"/><path d="M146 74.5 L164 84.5 L146 94.5 Z" fill="#000"/><text x="99.5" y="94.0" text-anchor="middle" font-family="Liberation Sans" font-weight="bold" font-size="27" fill="#000" stroke="#000" stroke-width="0.6" letter-spacing="0">X/Y</text><path d="M12 155 L26 141.5 L40 155" fill="none" stroke="#2e5e6a" stroke-width="3.2" stroke-linejoin="round"/><path d="M15.5 154 L26 144 L36.5 154 V164 H15.5 Z" fill="#6aa0ae" stroke="#2e5e6a" stroke-width="1"/><rect x="33" y="141" width="3" height="7" fill="#5a8e9c" stroke="#2e5e6a" stroke-width="0.8"/><g filter="url(#sh)"><path d="M209.4 19.3 A74 74 0 0 1 283.4 19.3 L261.4 57.4 A30 30 0 0 0 231.4 57.4 Z" fill="url(#jr)" stroke="#1e3c44" stroke-width="1.3"/><path d="M283.4 147.5 A74 74 0 0 1 209.4 147.5 L231.4 109.4 A30 30 0 0 0 261.4 109.4 Z" fill="url(#jr)" stroke="#1e3c44" stroke-width="1.3"/></g><circle cx="246.4" cy="83.4" r="34.5" fill="url(#jc)" stroke="#1e3c44" stroke-width="1.5"/><circle cx="246.4" cy="83.4" r="32.5" fill="none" stroke="#a8d0dc" stroke-width="1" opacity="0.5"/><path d="M236.4 37.5 L246.4 19.5 L256.4 37.5 Z" fill="#000"/><g filter="url(#sh)"><path d="M309.3 19.3 A74 74 0 0 1 383.3 19.3 L361.3 57.4 A30 30 0 0 0 331.3 57.4 Z" fill="url(#jr)" stroke="#1e3c44" stroke-width="1.3"/><path d="M383.3 147.5 A74 74 0 0 1 309.3 147.5 L331.3 109.4 A30 30 0 0 0 361.3 109.4 Z" fill="url(#jr)" stroke="#1e3c44" stroke-width="1.3"/></g><circle cx="346.3" cy="83.4" r="34.5" fill="url(#jc)" stroke="#1e3c44" stroke-width="1.5"/><circle cx="346.3" cy="83.4" r="32.5" fill="none" stroke="#a8d0dc" stroke-width="1" opacity="0.5"/><path d="M336.3 37.5 L346.3 19.5 L356.3 37.5 Z" fill="#000"/><path d="M236.4 130.5 L246.4 148 L256.4 130.5 Z" fill="#000"/><text x="246.4" y="93.5" text-anchor="middle" font-family="Liberation Sans" font-weight="bold" font-size="27" fill="#000" stroke="#000" stroke-width="0.9">Z</text><line x1="346.3" y1="118" x2="346.3" y2="158" stroke="#1e3c44" stroke-width="1.2"/><path d="M328 132.2 L339 135.4 L330.4 142.5 Z" fill="#000"/><path d="M353.2 129.9 L364.2 127.5 L361.9 137 Z M356.3 140.1 L367.4 137 L365 148.8 Z" fill="#000"/><g fill="#000"><circle cx="332.7" cy="79.5" r="7.5"/><rect x="330.5" y="69.7" width="4.4" height="5" transform="rotate(0 332.7 79.5)"/><rect x="330.5" y="69.7" width="4.4" height="5" transform="rotate(45 332.7 79.5)"/><rect x="330.5" y="69.7" width="4.4" height="5" transform="rotate(90 332.7 79.5)"/><rect x="330.5" y="69.7" width="4.4" height="5" transform="rotate(135 332.7 79.5)"/><rect x="330.5" y="69.7" width="4.4" height="5" transform="rotate(180 332.7 79.5)"/><rect x="330.5" y="69.7" width="4.4" height="5" transform="rotate(225 332.7 79.5)"/><rect x="330.5" y="69.7" width="4.4" height="5" transform="rotate(270 332.7 79.5)"/><rect x="330.5" y="69.7" width="4.4" height="5" transform="rotate(315 332.7 79.5)"/></g><circle cx="332.7" cy="79.5" r="3" fill="#78acba"/><path d="M342.2 70 H352.4 V90 L347 97.6 L342.2 90 Z" fill="#000"/></svg><svg class="a" style="left:1475px;top:418px" width="440" height="42"><defs><radialGradient id="bt" cx="0.4" cy="0.35" r="0.7"><stop offset="0" stop-color="#8cbcca"/><stop offset="1" stop-color="#4e7e8c"/></radialGradient>
<radialGradient id="bgq" cx="0.4" cy="0.35" r="0.7"><stop offset="0" stop-color="#6ee86e"/><stop offset="1" stop-color="#22a022"/></radialGradient></defs><path d="M14.7 12 A12 12 0 1 0 28.7 12" fill="none" stroke="#3e6e7c" stroke-width="6" stroke-linecap="round"/><path d="M14.7 12 A12 12 0 1 0 28.7 12" fill="none" stroke="#5e94a2" stroke-width="3.6" stroke-linecap="round"/><line x1="21.7" y1="7" x2="21.7" y2="18" stroke="#3e6e7c" stroke-width="5.5" stroke-linecap="round"/><line x1="21.7" y1="7" x2="21.7" y2="18" stroke="#6aa0ae" stroke-width="3" stroke-linecap="round"/><circle cx="66.7" cy="21" r="13" fill="none" stroke="#3e6e7c" stroke-width="4.5"/><circle cx="66.7" cy="21" r="13" fill="none" stroke="#6aa0ae" stroke-width="2"/><rect x="59.7" y="16" width="13" height="9" fill="#a8d8e4" stroke="#3e6e7c" stroke-width="1.2"/><line x1="57.7" y1="30" x2="75.7" y2="12" stroke="#3e6e7c" stroke-width="2.5"/><circle cx="111.7" cy="21" r="15" fill="url(#bt)"/><text x="112.2" y="31.5" text-anchor="middle" font-family="Liberation Sans" font-weight="bold" font-size="27.5" fill="#fff" stroke="#3a6a78" stroke-width="1.6" paint-order="stroke">P</text><circle cx="156.7" cy="21" r="15" fill="url(#bt)"/><text x="157.2" y="31.5" text-anchor="middle" font-family="Liberation Sans" font-weight="bold" font-size="27.5" fill="#fff" stroke="#3a6a78" stroke-width="1.6" paint-order="stroke">1</text><circle cx="201.7" cy="21" r="15" fill="url(#bt)"/><text x="202.2" y="31.5" text-anchor="middle" font-family="Liberation Sans" font-weight="bold" font-size="27.5" fill="#fff" stroke="#3a6a78" stroke-width="1.6" paint-order="stroke">2</text><circle cx="246.7" cy="21" r="15" fill="url(#bt)"/><text x="247.2" y="31.5" text-anchor="middle" font-family="Liberation Sans" font-weight="bold" font-size="27.5" fill="#fff" stroke="#3a6a78" stroke-width="1.6" paint-order="stroke">3</text><circle cx="291.7" cy="21" r="15" fill="url(#bt)"/><text x="292.2" y="31.5" text-anchor="middle" font-family="Liberation Sans" font-weight="bold" font-size="27.5" fill="#fff" stroke="#3a6a78" stroke-width="1.6" paint-order="stroke">4</text><circle cx="336.7" cy="21" r="15" fill="url(#bt)"/><text x="337.2" y="31.5" text-anchor="middle" font-family="Liberation Sans" font-weight="bold" font-size="27.5" fill="#fff" stroke="#3a6a78" stroke-width="1.6" paint-order="stroke">5</text><circle cx="381.7" cy="21" r="15.5" fill="url(#bgq)"/><text x="382.2" y="31.5" text-anchor="middle" font-family="Liberation Sans" font-weight="bold" font-size="27.5" fill="#fff" stroke="#2a8a2a" stroke-width="1.6" paint-order="stroke">?</text></svg><svg class="a" style="left:1475px;top:460px" width="440" height="160"><defs>
<linearGradient id="st" x1="0" y1="0" x2="0" y2="1"><stop offset="0" stop-color="#8cc4d2"/><stop offset="0.5" stop-color="#6aaabc"/><stop offset="1" stop-color="#5a96a6"/></linearGradient>
<pattern id="sp" width="4.17" height="20" patternUnits="userSpaceOnUse"><rect x="0" width="1" height="20" fill="#2e5e6a" opacity="0.55"/></pattern>
<linearGradient id="tg" x1="0" y1="0" x2="1" y2="0"><stop offset="0" stop-color="#0000ff"/><stop offset="0.25" stop-color="#00ffff"/><stop offset="0.45" stop-color="#00ff00"/><stop offset="0.7" stop-color="#ffff00"/><stop offset="1" stop-color="#ff0000"/></linearGradient>
</defs><rect x="49.5" y="9.300000000000011" width="310.5" height="13" rx="6.5" fill="url(#st)" stroke="#4e8494" stroke-width="1"/><rect x="55.5" y="9.800000000000011" width="298.5" height="12" fill="url(#sp)"/><text x="58.299999999999955" y="19.80000000000001" font-family="Liberation Sans" font-weight="bold" font-size="9.5" fill="#10183a">Feedrate</text><path d="M135.5 5.800000000000011 L138.5 10.800000000000011 V20.80000000000001 L135.5 25.80000000000001 L132.5 20.80000000000001 V10.800000000000011 Z" fill="#000"/><rect x="49.5" y="41.5" width="310.5" height="13" rx="6.5" fill="url(#st)" stroke="#4e8494" stroke-width="1"/><rect x="55.5" y="42" width="298.5" height="12" fill="url(#sp)"/><text x="58.299999999999955" y="52" font-family="Liberation Sans" font-weight="bold" font-size="9.5" fill="#10183a">Flowrate</text><path d="M206 38 L209 43 V53 L206 58 L203 53 V43 Z" fill="#000"/><rect x="49.5" y="73.70000000000005" width="310.5" height="13" rx="6.5" fill="url(#st)" stroke="#4e8494" stroke-width="1"/><rect x="55.5" y="74.20000000000005" width="298.5" height="12" fill="url(#sp)"/><text x="58.299999999999955" y="84.20000000000005" font-family="Liberation Sans" font-weight="bold" font-size="9.5" fill="#10183a">Fan</text><path d="M363 70.20000000000005 L366 75.20000000000005 V85.20000000000005 L363 90.20000000000005 L360 85.20000000000005 V75.20000000000005 Z" fill="#000"/><rect x="49.5" y="105.5" width="310.5" height="13" fill="url(#tg)"/><text x="58.299999999999955" y="116" font-family="Liberation Sans" font-weight="bold" font-size="9.5" fill="#fff">Bed Temperature</text><text x="354.5" y="116" text-anchor="end" font-family="Liberation Sans" font-weight="bold" font-size="9.5" fill="#fde8d8">60.31°C</text><path d="M201.5 102 H211.5 L207.5 107 L209.5 112 L207.5 117 L211.5 122 H201.5 L205.5 117 L203.5 112 L205.5 107 Z" fill="#000"/><rect x="49.5" y="137.10000000000002" width="310.5" height="13" fill="url(#tg)"/><text x="58.299999999999955" y="147.60000000000002" font-family="Liberation Sans" font-weight="bold" font-size="9.5" fill="#fff">Extruder 1</text><text x="204" y="147.60000000000002" text-anchor="middle" font-family="Liberation Sans" font-weight="bold" font-size="9.5" fill="#002000">260.26°C</text><path d="M336 133.60000000000002 H346 L342 138.60000000000002 L344 143.60000000000002 L342 148.60000000000002 L346 153.60000000000002 H336 L340 148.60000000000002 L338 143.60000000000002 L340 138.60000000000002 Z" fill="#000"/><g transform="translate(10,6)" fill="#000"><circle cx="17" cy="4" r="2.5"/><path d="M9 6 L15 6 L17 9 L14 13 L18 15 L16 16 L12 14 L10 17 L5 23 L4 22 L9 15 L11 10 L9 10 L7 12 L6 11 Z"/><path d="M0 5 H7 M2 9 H7 M1 12 H6" stroke="#000" stroke-width="0.8"/></g><g transform="translate(11,38)" fill="#000"><rect x="1" y="0" width="2.5" height="9"/><rect x="6" y="3" width="2.5" height="6"/><rect x="11" y="5" width="2.5" height="4"/><rect x="16" y="6" width="2.5" height="3"/><rect x="1" y="13" width="15" height="2"/><path d="M15 10.5 L20 14 L15 17.5 Z"/></g><g transform="translate(11,70)" fill="#000"><circle cx="10" cy="10" r="2.5"/><path d="M9 8 C5 9, 2 6, 3.5 2.5 C5 0, 9 0.5, 10 3 Z"/><path d="M12 9 C11 5, 14 2, 17.5 3.5 C20 5, 19.5 9, 17 10 Z"/><path d="M11 12 C15 11, 18 14, 16.5 17.5 C15 20, 11 19.5, 10 17 Z"/><path d="M8 11 C9 15, 6 18, 2.5 16.5 C0 15, 0.5 11, 3 10 Z"/><line x1="0.5" y1="19.5" x2="19.5" y2="1" stroke="#e01818" stroke-width="1.6"/></g><g transform="translate(8,101)" fill="none" stroke="#000" stroke-width="2"><path d="M4 1 H23 L27 20 H1 Z"/><path d="M3 7.5 H25 M2 14 H26 M10.5 1 L9.5 20 M17 1 L18 20"/></g><g transform="translate(8,135)" fill="#000"><path d="M0 1 H6 V15 L3 20 L0 15 Z"/><text x="7" y="16" font-family="Liberation Sans" font-weight="bold" font-size="14">1</text></g></svg><div class="a" style="left:1844px;top:466px;width:46px;height:20px;background:#fff;border:1px solid #a8a8a8"></div><div class="a" style="left:1874px;top:468px;width:14px;height:16px;background:#f0f0f0;border:1px solid #dcdcdc"></div><svg class="a" style="left:1874px;top:468px" width="14" height="16"><path d="M4 6 L7 3 L10 6 Z M4 10 L7 13 L10 10 Z" fill="#000"/><line x1="2" y1="8" x2="12" y2="8" stroke="#c8c8c8"/></svg><div class="t" style="left:1846.5px;top:470px;font-size:11.3px">100</div><div class="a" style="left:1844px;top:498px;width:46px;height:20px;background:#fff;border:1px solid #a8a8a8"></div><div class="a" style="left:1874px;top:500px;width:14px;height:16px;background:#f0f0f0;border:1px solid #dcdcdc"></div><svg class="a" style="left:1874px;top:500px" width="14" height="16"><path d="M4 6 L7 3 L10 6 Z M4 10 L7 13 L10 10 Z" fill="#000"/><line x1="2" y1="8" x2="12" y2="8" stroke="#c8c8c8"/></svg><div class="t" style="left:1846.5px;top:502px;font-size:11.3px">100</div><div class="a" style="left:1844px;top:530px;width:46px;height:20px;background:#fff;border:1px solid #a8a8a8"></div><div class="a" style="left:1874px;top:532px;width:14px;height:16px;background:#f0f0f0;border:1px solid #dcdcdc"></div><svg class="a" style="left:1874px;top:532px" width="14" height="16"><path d="M4 6 L7 3 L10 6 Z M4 10 L7 13 L10 10 Z" fill="#000"/><line x1="2" y1="8" x2="12" y2="8" stroke="#c8c8c8"/></svg><div class="t" style="left:1846.5px;top:534px;font-size:11.3px">100</div><div class="a" style="left:1844px;top:562px;width:48px;height:20px;background:#fff;border:1px solid #a8a8a8"></div><div class="a" style="left:1876px;top:564px;width:14px;height:16px;background:#f0f0f0;border:1px solid #dcdcdc"></div><svg class="a" style="left:1876px;top:564px" width="14" height="16"><path d="M4 6 L7 3 L10 6 Z M4 10 L7 13 L10 10 Z" fill="#000"/><line x1="2" y1="8" x2="12" y2="8" stroke="#c8c8c8"/></svg><div class="t" style="left:1846.5px;top:566px;font-size:11.3px">60</div><div class="a" style="left:1844px;top:594px;width:48px;height:20px;background:#fff;border:1px solid #a8a8a8"></div><div class="a" style="left:1876px;top:596px;width:14px;height:16px;background:#f0f0f0;border:1px solid #dcdcdc"></div><svg class="a" style="left:1876px;top:596px" width="14" height="16"><path d="M4 6 L7 3 L10 6 Z M4 10 L7 13 L10 10 Z" fill="#000"/><line x1="2" y1="8" x2="12" y2="8" stroke="#c8c8c8"/></svg><div class="t" style="left:1846.5px;top:598px;font-size:11.3px">260</div><div class="a" style="left:1867px;top:598px;width:1px;height:13px;background:#000"></div><div class="a" style="left:1476px;top:631px;width:438px;height:41px;border:1px solid #dcdcdc;border-radius:2px"></div><div class="t" style="left:1482px;top:625px;font-size:11px;background:#f0f0f0;padding:0 2px">Debug Options</div><div class="a" style="left:1485px;top:644px;width:87px;height:21px;background:#e1e1e1;border:1px solid #adadad"></div><svg class="a" style="left:1488px;top:647px" width="14" height="14"><defs><radialGradient id="rd1485" cx="0.4" cy="0.35" r="0.7"><stop offset="0" stop-color="#8aa0e0"/><stop offset="1" stop-color="#1a2a6a"/></radialGradient></defs><circle cx="7" cy="7" r="5.5" fill="url(#rd1485)" stroke="#111" stroke-width="1.2"/></svg><div class="t" style="left:1515.5px;top:649px;font-size:11.5px;letter-spacing:-0.2px">Echo</div><div class="a" style="left:1575px;top:644px;width:87px;height:21px;background:#e1e1e1;border:1px solid #adadad"></div><svg class="a" style="left:1578px;top:647px" width="14" height="14"><defs><radialGradient id="rd1575" cx="0.45" cy="0.4" r="0.7"><stop offset="0" stop-color="#e8f8ff"/><stop offset="1" stop-color="#7ad0f0"/></radialGradient></defs><circle cx="7" cy="7" r="5.5" fill="url(#rd1575)" stroke="#223" stroke-width="1.2"/></svg><div class="t" style="left:1605.5px;top:649px;font-size:11.5px;letter-spacing:-0.2px">Info</div><div class="a" style="left:1666px;top:644px;width:87.5px;height:21px;background:#e1e1e1;border:1px solid #adadad"></div><svg class="a" style="left:1669px;top:647px" width="14" height="14"><defs><radialGradient id="rd1666" cx="0.45" cy="0.4" r="0.7"><stop offset="0" stop-color="#e8f8ff"/><stop offset="1" stop-color="#7ad0f0"/></radialGradient></defs><circle cx="7" cy="7" r="5.5" fill="url(#rd1666)" stroke="#223" stroke-width="1.2"/></svg><div class="t" style="left:1696.5px;top:649px;font-size:11.5px;letter-spacing:-0.2px">Errors</div><div class="a" style="left:1756px;top:644px;width:99.5px;height:21px;background:#e1e1e1;border:1px solid #adadad"></div><svg class="a" style="left:1759px;top:647px" width="14" height="14"><defs><radialGradient id="rd1756" cx="0.4" cy="0.35" r="0.7"><stop offset="0" stop-color="#8aa0e0"/><stop offset="1" stop-color="#1a2a6a"/></radialGradient></defs><circle cx="7" cy="7" r="5.5" fill="url(#rd1756)" stroke="#111" stroke-width="1.2"/></svg><div class="t" style="left:1786.5px;top:649px;font-size:11.5px;letter-spacing:-0.2px">Dry Run</div><div class="a" style="left:1874px;top:644px;width:30px;height:21px;background:#e1e1e1;border:1px solid #adadad"></div><div class="t" style="left:1881px;top:649px;font-size:11.5px">OK</div><div class="a" style="left:0;top:959px;width:1920px;height:1px;background:#707070"></div><div class="a" style="left:0;top:960px;width:1920px;height:4px;background:#fff"></div><div class="a" style="left:0;top:964px;width:1920px;height:1px;background:#707070"></div><div class="a" style="left:0;top:965px;width:1920px;height:92px;background:#f0f0f0"></div><div class="t" style="left:7px;top:972px;font-size:11.5px;letter-spacing:-0.3px">Show in Log:</div><svg class="a" style="left:83.6px;top:971px" width="14" height="14"><defs><radialGradient id="lr84" cx="0.45" cy="0.4" r="0.65"><stop offset="0" stop-color="#e8fbff"/><stop offset="1" stop-color="#6cc8ec"/></radialGradient></defs><circle cx="6.5" cy="6.5" r="5.2" fill="url(#lr84)" stroke="#2a3a4a" stroke-width="1.3"/></svg><div class="t" style="left:97.7px;top:972px;font-size:11.5px;letter-spacing:-0.35px">Commands</div><svg class="a" style="left:170.3px;top:971px" width="14" height="14"><defs><radialGradient id="lr171" cx="0.45" cy="0.4" r="0.65"><stop offset="0" stop-color="#e8fbff"/><stop offset="1" stop-color="#6cc8ec"/></radialGradient></defs><circle cx="6.5" cy="6.5" r="5.2" fill="url(#lr171)" stroke="#2a3a4a" stroke-width="1.3"/></svg><div class="t" style="left:184.8px;top:972px;font-size:11.5px;letter-spacing:-0.35px">Infos</div><svg class="a" style="left:228px;top:971px" width="14" height="14"><defs><radialGradient id="lr229" cx="0.45" cy="0.4" r="0.65"><stop offset="0" stop-color="#e8fbff"/><stop offset="1" stop-color="#6cc8ec"/></radialGradient></defs><circle cx="6.5" cy="6.5" r="5.2" fill="url(#lr229)" stroke="#2a3a4a" stroke-width="1.3"/></svg><div class="t" style="left:243.2px;top:972px;font-size:11.5px;letter-spacing:-0.35px">Warnings</div><svg class="a" style="left:308.2px;top:971px" width="14" height="14"><defs><radialGradient id="lr309" cx="0.45" cy="0.4" r="0.65"><stop offset="0" stop-color="#e8fbff"/><stop offset="1" stop-color="#6cc8ec"/></radialGradient></defs><circle cx="6.5" cy="6.5" r="5.2" fill="url(#lr309)" stroke="#2a3a4a" stroke-width="1.3"/></svg><div class="t" style="left:323.4px;top:972px;font-size:11.5px;letter-spacing:-0.35px">Errors</div><svg class="a" style="left:370.1px;top:971px" width="14" height="14"><defs><radialGradient id="lr371" cx="0.45" cy="0.4" r="0.65"><stop offset="0" stop-color="#e8fbff"/><stop offset="1" stop-color="#6cc8ec"/></radialGradient></defs><circle cx="6.5" cy="6.5" r="5.2" fill="url(#lr371)" stroke="#2a3a4a" stroke-width="1.3"/></svg><div class="t" style="left:385.3px;top:972px;font-size:11.5px;letter-spacing:-0.35px">ACK</div><svg class="a" style="left:426.3px;top:971px" width="14" height="14"><defs><radialGradient id="lr427" cx="0.45" cy="0.4" r="0.65"><stop offset="0" stop-color="#e8fbff"/><stop offset="1" stop-color="#6cc8ec"/></radialGradient></defs><circle cx="6.5" cy="6.5" r="5.2" fill="url(#lr427)" stroke="#2a3a4a" stroke-width="1.3"/></svg><div class="t" style="left:441.1px;top:972px;font-size:11.5px;letter-spacing:-0.35px">Auto Scroll</div><svg class="a" style="left:515px;top:969px" width="12" height="15"><rect x="1" y="2.5" width="10" height="1.5" fill="#777"/><rect x="4" y="1" width="4" height="1.5" fill="#777"/><path d="M2 5 H10 L9.2 14 H2.8 Z" fill="none" stroke="#777" stroke-width="1.2"/><path d="M4.5 6.5 V12.5 M6 6.5 V12.5 M7.5 6.5 V12.5" stroke="#777" stroke-width="0.8"/></svg><div class="t" style="left:530.4px;top:972px;font-size:11.5px;letter-spacing:-0.3px">Clear Log</div><svg class="a" style="left:597px;top:968px" width="15" height="16"><path d="M1.5 4.5 H6 L8 6.5 V14.5 H1.5 Z" fill="#f8f8f8" stroke="#777"/><path d="M5.5 1.5 H10 L13.5 5 V11.5 H8" fill="none" stroke="#777"/><path d="M10 1.5 V5 H13.5" fill="none" stroke="#777" stroke-width="0.8"/></svg><div class="t" style="left:614.3px;top:972px;font-size:11.5px;letter-spacing:-0.3px">Copy</div><div class="a" style="left:1px;top:990px;width:102px;height:67px;background:#5f9ea0"></div><div class="a" style="left:104px;top:990px;width:1799px;height:16px;background:#ffffff"></div><div class="t mono" style="left:6.5px;top:993px;font-size:12.4px;color:#f4f4f4">19:27:16.527</div><div class="t mono" style="left:109px;top:993px;font-size:12.4px;color:#000080">N244 M105*37</div><div class="a" style="left:104px;top:1006px;width:1799px;height:16px;background:#faefe6"></div><div class="t mono" style="left:6.5px;top:1009px;font-size:12.4px;color:#f4f4f4">19:27:16.527</div><div class="t mono" style="left:109px;top:1009px;font-size:12.4px;color:#000080">ok 244</div><div class="a" style="left:104px;top:1022px;width:1799px;height:16px;background:#ffffff"></div><div class="t mono" style="left:6.5px;top:1025px;font-size:12.4px;color:#f4f4f4">19:27:16.542</div><div class="t mono" style="left:109px;top:1025px;font-size:12.4px;color:#000080">T:260.26 /260 B:60.31 /60 B@:0 @:0</div><div class="a" style="left:104px;top:1038px;width:1799px;height:16px;background:#faefe6"></div><div class="t mono" style="left:6.5px;top:1041px;font-size:12.4px;color:#f4f4f4">19:27:17.529</div><div class="t mono" style="left:109px;top:1041px;font-size:12.4px;color:#000080">wait</div><div class="a" style="left:104px;top:1054px;width:1799px;height:3px;background:#fff"></div><div class="a" style="left:1903px;top:990px;width:16px;height:67px;background:#f0f0f0"></div><svg class="a" style="left:1902px;top:990px" width="18" height="66"><path d="M5.5 11 L9 7.5 L12.5 11" fill="none" stroke="#606060" stroke-width="1.3"/><path d="M5.5 56 L9 59.5 L12.5 56" fill="none" stroke="#606060" stroke-width="1.3"/><rect x="2" y="33" width="15" height="16" fill="#cdcdcd"/></svg><div class="a" style="left:0;top:1057px;width:1920px;height:1px;background:#646464"></div><div class="a" style="left:1919px;top:101px;width:1px;height:957px;background:#646464"></div><div class="a" style="left:0;top:101px;width:1px;height:957px;background:#646464"></div><div class="a" style="left:0;top:1078px;width:1920px;height:2px;background:#2a2a2a"></div><div class="t" style="left:5px;top:1064px">Connected: default</div><div class="t" style="left:784.4px;top:1064.5px;letter-spacing:-0.35px">Extruder: 260.3/260°C Bed: 60.3/60°C</div><div class="t" style="left:1666px;top:1064px">Idle</div><div class="a" style="left:1690px;top:1061px;width:214px;height:15px;background:#e6e6e6;border:1px solid #bcbcbc"></div></body></html>
